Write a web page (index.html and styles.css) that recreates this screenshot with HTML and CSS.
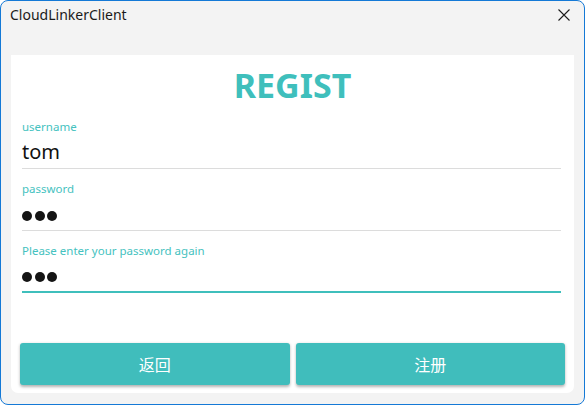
FILE: index.html
```html
<!DOCTYPE html>
<html>
<head>
<meta charset="utf-8">
<link rel="stylesheet" href="styles.css">
</head>
<body>
<div class="window">
  <div class="titlebar">
    <span class="app-title">CloudLinkerClient</span>
    <svg class="close" width="12" height="12" viewBox="0 0 12 12"><path d="M0.5 0.5 L11.5 11.5 M11.5 0.5 L0.5 11.5" stroke="#1b1b1b" stroke-width="1.1" fill="none"/></svg>
  </div>
  <div class="card">
    <h1 class="heading">REGIST</h1>
    <div class="form">
      <div class="field">
        <div class="label">username</div>
        <div class="value">tom</div>
      </div>
      <div class="field">
        <div class="label">password</div>
        <div class="value dots"><i></i><i></i><i></i></div>
      </div>
      <div class="field focused">
        <div class="label">Please enter your password again</div>
        <div class="value dots"><i></i><i></i><i></i></div>
      </div>
    </div>
    <div class="actions">
      <button class="btn">返回</button>
      <button class="btn">注册</button>
    </div>
  </div>
</div>
</body>
</html>
```
FILE: styles.css
```css
* { box-sizing: border-box; }
html, body { margin: 0; padding: 0; background: #ffffff; }
body { font-family: "Noto Sans", "Noto Sans CJK SC", sans-serif; }

.window {
  width: 585px;
  height: 405px;
  border: 1px solid #1479d6;
  border-radius: 8px;
  background: #f3f3f3;
  display: flex;
  flex-direction: column;
  overflow: hidden;
}

.titlebar {
  height: 54px;
  flex: none;
  display: flex;
  align-items: flex-start;
  justify-content: space-between;
  padding: 3px 14px 0 9px;
}
.app-title {
  font-size: 14px;
  line-height: 22px;
  color: #1a1a1a;
}
.close { margin-top: 5px; }

.card {
  flex: 1;
  margin: 0 10px 11px 10px;
  background: #ffffff;
  border-radius: 0 0 7px 7px;
  display: flex;
  flex-direction: column;
  padding: 10px 9px 8px 9px;
}

.heading {
  margin: 0;
  text-align: center;
  font-size: 34px;
  line-height: 40px;
  font-weight: 700;
  color: #3fbfbc;
}

.form {
  margin: 2px 4px 0 2px;
}
.field {
  margin-top: 12px;
  border-bottom: 1px solid #dcdcdc;
}
.field.focused { border-bottom: 2px solid #3fbfbc; }
.label {
  font-size: 11.5px;
  line-height: 16px;
  color: #45c2c0;
}
.value {
  font-size: 20px;
  line-height: 33px;
  height: 33px;
  color: #111;
}
.focused .value { height: 32px; }
.dots {
  display: flex;
  align-items: center;
  gap: 2.5px;
  padding-top: 4px;
}
.dots i {
  width: 10px;
  height: 10px;
  border-radius: 50%;
  background: #141414;
}

.actions {
  margin-top: auto;
  display: flex;
  gap: 6px;
}
.btn {
  flex: 1;
  height: 42px;
  border: none;
  border-radius: 3px;
  background: #40bdbc;
  color: #ffffff;
  font-family: "Noto Sans CJK SC", sans-serif;
  font-size: 16px;
  box-shadow: 0 1.5px 3px rgba(0,0,0,0.3);
  padding: 0;
}
```
